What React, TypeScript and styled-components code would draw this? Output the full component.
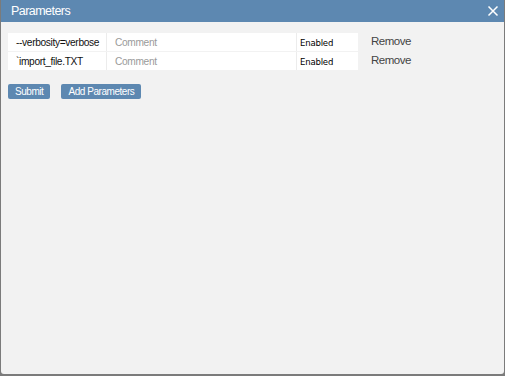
import React from "react";
import styled, { createGlobalStyle } from "styled-components";

const SANS = '"Liberation Sans", Arial, sans-serif';

const Global = createGlobalStyle`
  html, body { margin: 0; padding: 0; }
  body {
    background: #7b7b7b;
    font-family: ${SANS};
    width: 505px;
    height: 376px;
    overflow: hidden;
  }
`;

const Dialog = styled.div`
  margin: 0 1px 0 1px;
  width: 503px;
  height: 374px;
  background: #f2f2f2;
  display: flex;
  flex-direction: column;
  border-radius: 0 0 3px 3px;
`;

const Header = styled.div`
  height: 22px;
  background: #5d88b1;
  display: flex;
  align-items: center;
  justify-content: space-between;
  padding: 0 4px 0 10px;
  color: #fff;
  font-size: 12.5px;
  letter-spacing: -0.55px;
`;

const Close = styled.div`
  width: 14px;
  height: 14px;
  display: flex;
  align-items: center;
  justify-content: center;
`;

const Body = styled.div`
  padding: 11px 7px;
  display: flex;
  flex-direction: column;
`;

const Rows = styled.div`
  display: flex;
  flex-direction: column;
  gap: 1px;
`;

const Row = styled.div`
  display: flex;
  align-items: center;
  height: 18px;
`;

const Cell = styled.div<{ $w: number; $muted?: boolean; $alt?: boolean }>`
  width: ${(p) => p.$w}px;
  height: 18px;
  background: #fff;
  box-sizing: border-box;
  padding-left: ${(p) => (p.$alt ? 3 : 8)}px;
  display: flex;
  align-items: center;
  font-size: ${(p) => (p.$alt ? 9.5 : 10.2)}px;
  letter-spacing: ${(p) => (p.$alt ? "-0.2px" : "-0.35px")};
  font-family: ${(p) =>
    p.$alt ? '"DejaVu Sans Condensed", "DejaVu Sans", sans-serif' : SANS};
  color: ${(p) => (p.$muted ? "#9a9a9a" : p.$alt ? "#000" : "#111")};
  border-left: ${(p) => (p.$alt || p.$muted ? "1px solid #ececec" : "none")};
  white-space: nowrap;
`;

const RemoveLink = styled.div`
  margin-left: 13px;
  font-size: 11.5px;
  letter-spacing: -0.5px;
  color: #444;
  margin-top: -3px;
`;

const Buttons = styled.div`
  display: flex;
  gap: 11px;
  margin-top: 14px;
`;

const Button = styled.button`
  height: 15px;
  padding: 0 7px;
  border: none;
  border-radius: 2px;
  background: #5d88b1;
  color: #fff;
  font-family: ${SANS};
  font-size: 10px;
  letter-spacing: -0.45px;
  line-height: 15px;
`;

const params = [
  { name: "--verbosity=verbose" },
  { name: "`import_file.TXT" },
];

export default function App() {
  return (
    <>
      <Global />
      <Dialog>
        <Header>
          <span>Parameters</span>
          <Close>
            <svg width="12" height="12" viewBox="0 0 12 12">
              <path d="M1.5 1.5L10.5 10.5M10.5 1.5L1.5 10.5" stroke="#fff" strokeWidth="1.5" />
            </svg>
          </Close>
        </Header>
        <Body>
          <Rows>
            {params.map((p) => (
              <Row key={p.name}>
                <Cell $w={98}>{p.name}</Cell>
                <Cell $w={190} $muted>
                  Comment
                </Cell>
                <Cell $w={62} $alt>
                  Enabled
                </Cell>
                <RemoveLink>Remove</RemoveLink>
              </Row>
            ))}
          </Rows>
          <Buttons>
            <Button>Submit</Button>
            <Button>Add Parameters</Button>
          </Buttons>
        </Body>
      </Dialog>
    </>
  );
}
